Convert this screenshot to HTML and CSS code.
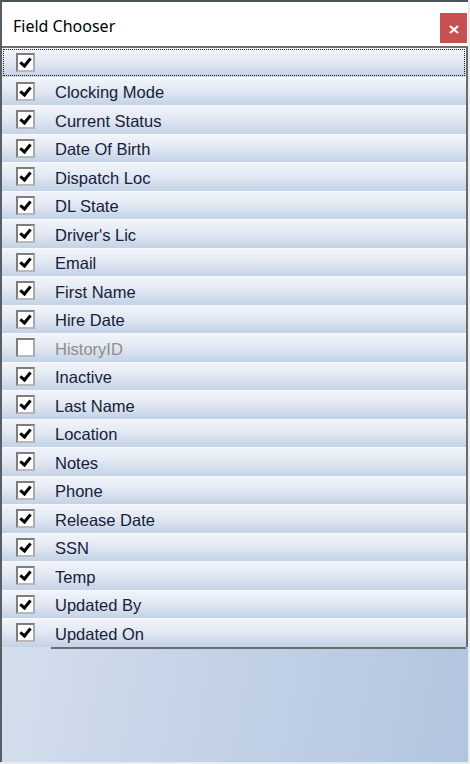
FILE: index.html
```html
<!DOCTYPE html>
<html lang="en">
<head>
  <meta charset="UTF-8" />
  <title>Field Chooser</title>
  <link rel="stylesheet" href="styles.css">
</head>
<body>

  <div class="window">
    <div class="titlebar">
      <span class="title">Field Chooser</span>
      <button class="close" type="button">
        <svg width="10" height="9" viewBox="0 0 10 9"><path d="M1 1 L9 8 M9 1 L1 8" stroke="#fff" stroke-width="2.2" fill="none"/></svg>
      </button>
    </div>

    <div class="client">
      <ul class="fields">
        <li class="row focus"><span class="box checked"></span><span class="name"></span></li>
        <li class="row"><span class="box checked"></span><span class="name">Clocking Mode</span></li>
        <li class="row"><span class="box checked"></span><span class="name">Current Status</span></li>
        <li class="row"><span class="box checked"></span><span class="name">Date Of Birth</span></li>
        <li class="row"><span class="box checked"></span><span class="name">Dispatch Loc</span></li>
        <li class="row"><span class="box checked"></span><span class="name">DL State</span></li>
        <li class="row"><span class="box checked"></span><span class="name">Driver's Lic</span></li>
        <li class="row"><span class="box checked"></span><span class="name">Email</span></li>
        <li class="row"><span class="box checked"></span><span class="name">First Name</span></li>
        <li class="row"><span class="box checked"></span><span class="name">Hire Date</span></li>
        <li class="row off"><span class="box"></span><span class="name">HistoryID</span></li>
        <li class="row"><span class="box checked"></span><span class="name">Inactive</span></li>
        <li class="row"><span class="box checked"></span><span class="name">Last Name</span></li>
        <li class="row"><span class="box checked"></span><span class="name">Location</span></li>
        <li class="row"><span class="box checked"></span><span class="name">Notes</span></li>
        <li class="row"><span class="box checked"></span><span class="name">Phone</span></li>
        <li class="row"><span class="box checked"></span><span class="name">Release Date</span></li>
        <li class="row"><span class="box checked"></span><span class="name">SSN</span></li>
        <li class="row"><span class="box checked"></span><span class="name">Temp</span></li>
        <li class="row"><span class="box checked"></span><span class="name">Updated By</span></li>
        <li class="row last"><span class="box checked"></span><span class="name">Updated On</span></li>
      </ul>
    </div>
  </div>

</body>
</html>
```

FILE: styles.css
```css
html, body {
  margin: 0;
  padding: 0;
}

body {
  width: 470px;
  height: 764px;
  overflow: hidden;
  background-color: #e9ecef;
}

.window {
  width: 468px;
  height: 762px;
  display: flex;
  flex-direction: column;
  border-top: 2px solid #4a525c;
  border-left: 2px solid #5a5d62;
  box-sizing: border-box;
  background-color: #ffffff;
}

.titlebar {
  height: 44px;
  flex: none;
  display: flex;
  align-items: flex-start;
  justify-content: space-between;
  background-color: #ffffff;
}

.title {
  margin: 13px 0 0 11px;
  font-family: "Noto Sans", sans-serif;
  font-size: 16px;
  color: #000000;
}

.close {
  width: 27px;
  height: 30px;
  margin: 11px 1px 0 0;
  border: none;
  background-color: #c75050;
  padding: 2px 0 0 0;
  display: flex;
  align-items: center;
  justify-content: center;
}

.client {
  flex: 1;
  background: linear-gradient(100deg, #dde5f0 0%, #c7d5e8 45%, #b2c5de 100%);
}

.fields {
  list-style: none;
  margin: 0;
  padding: 0;
  width: 466px;
  box-sizing: border-box;
  border-top: 2px solid #707070;
  border-right: 2px solid #6b6b6b;
  position: relative;
}

/* bottom edge only runs under the name column */
.fields::after {
  content: "";
  position: absolute;
  left: 49px;
  right: 0;
  bottom: -2px;
  height: 2px;
  background-color: #6e6e70;
}

.row {
  height: 28.5px;
  box-sizing: border-box;
  display: flex;
  align-items: center;
  border-top: 1px solid #f8fafd;
  background: linear-gradient(to bottom, #f1f4fa 0%, #e3e9f3 45%, #c3d2e6 100%);
  font-family: "Liberation Sans", Arial, sans-serif;
  font-size: 16.5px;
  color: #16213a;
}

.row.focus {
  outline: 1px dotted #222;
  outline-offset: -2px;
}

.row.off .name {
  color: #8d8d8d;
}

.box {
  width: 19px;
  height: 19px;
  box-sizing: border-box;
  margin-left: 14px;
  margin-right: 20px;
  border: 2px solid;
  border-color: #7e7e7e #a9a9a9 #b8b8b8 #7e7e7e;
  background-color: #ffffff;
  position: relative;
}

.box.checked::after {
  content: "";
  position: absolute;
  left: 4px;
  top: 1px;
  width: 4px;
  height: 8px;
  border: solid #000;
  border-width: 0 3px 3px 0;
  transform: rotate(40deg);
}

.name {
  padding-top: 3px;
}
```
